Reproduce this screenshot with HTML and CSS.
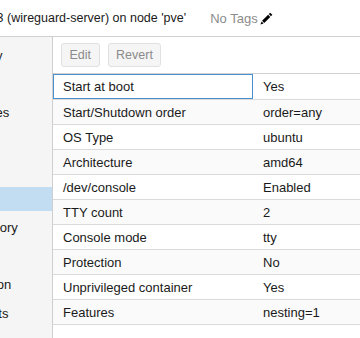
FILE: index.html
```html
<!DOCTYPE html>
<html lang="en">
<head>
    <meta charset="UTF-8">
    <meta name="viewport" content="width=device-width, initial-scale=1.0">
    <title>Container 103 - Options</title>
    <link rel="stylesheet" href="styles.css">
</head>
<body>
    <div class="header">
        <span class="title">Container 103 (wireguard-server) on node 'pve'</span>
        <span class="tags">No Tags
            <svg class="pencil" width="13" height="13" viewBox="0 0 12 12">
                <path d="M9.4 0.6 L11.4 2.6 L10.1 3.9 L8.1 1.9 Z"/>
                <path d="M7.5 2.5 L9.5 4.5 L3.9 10.1 L1.9 8.1 Z"/>
                <path d="M1.5 8.7 L3.3 10.5 L0.4 11.6 Z"/>
            </svg>
        </span>
    </div>
    <div class="content">
        <div class="menu">
            <div class="menu-item">Summary</div>
            <div class="menu-item">Console</div>
            <div class="menu-item">Resources</div>
            <div class="menu-item">Network</div>
            <div class="menu-item">DNS</div>
            <div class="menu-item selected">Options</div>
            <div class="menu-item">Task History</div>
            <div class="menu-item">Backup</div>
            <div class="menu-item">Replication</div>
            <div class="menu-item">Snapshots</div>
            <div class="menu-item">Firewall</div>
        </div>
        <div class="main">
            <div class="toolbar">
                <button class="btn" disabled>Edit</button>
                <button class="btn" disabled>Revert</button>
            </div>
            <div class="grid">
                <div class="row"><div class="cell name focused">Start at boot</div><div class="cell">Yes</div></div>
                <div class="row"><div class="cell name">Start/Shutdown order</div><div class="cell">order=any</div></div>
                <div class="row"><div class="cell name">OS Type</div><div class="cell">ubuntu</div></div>
                <div class="row"><div class="cell name">Architecture</div><div class="cell">amd64</div></div>
                <div class="row"><div class="cell name">/dev/console</div><div class="cell">Enabled</div></div>
                <div class="row"><div class="cell name">TTY count</div><div class="cell">2</div></div>
                <div class="row"><div class="cell name">Console mode</div><div class="cell">tty</div></div>
                <div class="row"><div class="cell name">Protection</div><div class="cell">No</div></div>
                <div class="row"><div class="cell name">Unprivileged container</div><div class="cell">Yes</div></div>
                <div class="row"><div class="cell name">Features</div><div class="cell">nesting=1</div></div>
            </div>
        </div>
    </div>
</body>
</html>
```
FILE: styles.css
```css
body {
    margin: 0;
    font-family: "Liberation Sans", Arial, sans-serif;
    font-size: 13px;
    color: #1a1a1a;
    background-color: #fff;
    height: 338px;
    overflow: hidden;
}
.header {
    height: 36px;
    border-bottom: 1px solid #d0d0d0;
    display: flex;
    align-items: center;
    white-space: nowrap;
    overflow: hidden;
}
.title {
    margin-left: -75px;
    font-size: 12.5px;
    color: #1a1a1a;
}
.tags {
    margin-left: 24px;
    color: #8c8c8c;
    display: flex;
    align-items: center;
}
.pencil {
    margin-left: 2px;
    fill: #000;
}
.content {
    display: flex;
    height: 301px;
}
.menu {
    width: 52px;
    flex-shrink: 0;
    background-color: #f5f5f5;
    border-right: 1px solid #cfcfcf;
    display: flex;
    flex-direction: column;
    gap: 4.67px;
    padding-top: 7px;
    overflow: hidden;
}
.menu-item {
    height: 24px;
    line-height: 24px;
    flex-shrink: 0;
    white-space: nowrap;
    overflow: hidden;
    text-indent: -53px;
    color: #1a1a1a;
}
.menu-item.selected {
    background-color: #c2ddf2;
}
.main {
    flex: 1;
    overflow: hidden;
}
.toolbar {
    height: 37px;
    box-sizing: border-box;
    padding: 6px 8px;
    display: flex;
    align-items: flex-start;
    gap: 8px;
    border-bottom: 1px solid #d0d0d0;
}
.btn {
    height: 24px;
    padding: 0 7.5px;
    font-family: "Liberation Sans", Arial, sans-serif;
    font-size: 12.5px;
    color: #8a8a8a;
    background-color: #f5f5f5;
    border: 1px solid #e1e1e1;
    border-radius: 3px;
}
.grid {
    border-bottom: 1px solid #dadada;
}
.row {
    display: flex;
    height: 25px;
    box-sizing: border-box;
    border-top: 1px solid #dadada;
    white-space: nowrap;
}
.row:first-child {
    border-top: none;
}
.row:nth-child(even) {
    background-color: #fafafa;
}
.cell {
    padding-left: 10px;
    line-height: 25px;
    box-sizing: border-box;
}
.cell.name {
    width: 200px;
    flex-shrink: 0;
}
.cell.focused {
    border: 1px solid #4a90d0;
    padding-left: 9px;
    line-height: 23px;
}
```
